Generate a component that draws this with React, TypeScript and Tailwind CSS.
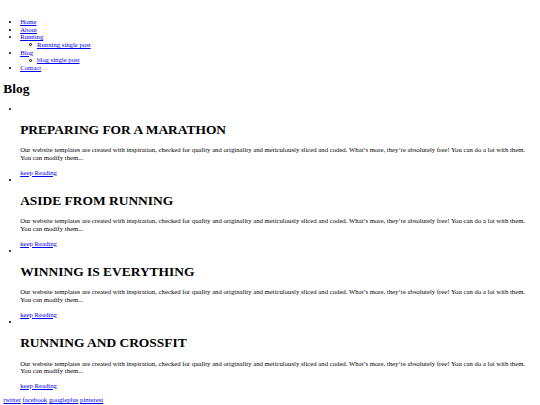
import React from "react";

const posts = [
  "PREPARING FOR A MARATHON",
  "ASIDE FROM RUNNING",
  "WINNING IS EVERYTHING",
  "RUNNING AND CROSSFIT",
];

const text =
  "Our website templates are created with inspiration, checked for quality and originality and meticulously sliced and coded. What\u2019s more, they\u2019re absolutely free! You can do a lot with them. You can modify them...";

function L({ children }: { children: React.ReactNode }) {
  return (
    <a href="#" className="text-[#0000EE] underline">
      {children}
    </a>
  );
}

function SubItem({ children }: { children: React.ReactNode }) {
  return (
    <li className="relative before:content-[''] before:absolute before:left-[-7.5px] before:top-[2.4px] before:w-[3px] before:h-[3px] before:rounded-full before:border-[0.7px] before:border-black">
      {children}
    </li>
  );
}

export default function App() {
  return (
    <div className="bg-white min-h-[405px] overflow-hidden">
      <div className="m-[3.36px] font-['Liberation_Serif',serif] text-[6.72px] leading-[7.72px] text-black">
        <div>&nbsp;</div>
        <ul className="list-disc pl-[16.8px] my-[6.72px]">
          <li>
            <L>Home</L>
          </li>
          <li>
            <L>About</L>
          </li>
          <li>
            <L>Running</L>
            <ul className="list-none pl-[16.8px]">
              <SubItem>
                <L>Running single post</L>
              </SubItem>
            </ul>
          </li>
          <li>
            <L>Blog</L>
            <ul className="list-none pl-[16.8px]">
              <SubItem>
                <L>blog single post</L>
              </SubItem>
            </ul>
          </li>
          <li>
            <L>Contact</L>
          </li>
        </ul>
        <h1 className="text-[13.44px] leading-[15.44px] font-bold my-[9px]">Blog</h1>
        <ul className="list-disc pl-[16.8px] my-[6.72px]">
          {posts.map((t) => (
            <li key={t}>
              <div>&nbsp;</div>
              <h2 className="text-[13.44px] leading-[15.44px] font-bold my-[9px]">{t}</h2>
              <p className="my-[6.72px]">{text}</p>
              <div>
                <L>keep Reading</L>
              </div>
            </li>
          ))}
        </ul>
        <div>
          <L>twitter</L> <L>facebook</L> <L>googleplus</L> <L>pinterest</L>
        </div>
      </div>
    </div>
  );
}
